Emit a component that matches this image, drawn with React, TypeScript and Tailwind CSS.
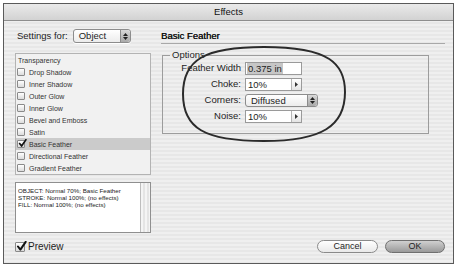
import React from 'react';

const stripes =
  'bg-[repeating-linear-gradient(180deg,#efefef_0px,#efefef_2px,#e7e7e7_2px,#e7e7e7_4px)]';

function CheckMark({ big }: { big: boolean }) {
  const s = big ? 11 : 9;
  return (
    <svg width={s} height={s} viewBox="0 0 10 10" className="absolute -top-[2px] left-0">
      <path d="M1.8 5 L4 7.8 L8.8 0.8" fill="none" stroke="#111" strokeWidth="1.8" strokeLinecap="round" strokeLinejoin="round" />
    </svg>
  );
}

function Box({ checked = false, big = false }: { checked?: boolean; big?: boolean }) {
  return (
    <span
      className={`relative inline-block shrink-0 border border-[#8a8a8a] rounded-[1px] bg-gradient-to-b from-white to-[#dcdcdc] ${
        big ? 'w-[10px] h-[10px]' : 'w-[8px] h-[8px]'
      }`}
    >
      {checked && <CheckMark big={big} />}
    </span>
  );
}

function UpDown() {
  return (
    <span className="flex flex-col items-center justify-center gap-[1px] w-[10px] h-full bg-gradient-to-b from-[#d8d8d8] to-[#a9a9a9] border-l border-[#8c8c8c] rounded-r-[3px]">
      <svg width="5" height="3" viewBox="0 0 5 3"><path d="M0 3 L2.5 0 L5 3 Z" fill="#222" /></svg>
      <svg width="5" height="3" viewBox="0 0 5 3"><path d="M0 0 L2.5 3 L5 0 Z" fill="#222" /></svg>
    </span>
  );
}

function Stepper({ value }: { value: string }) {
  return (
    <div className="flex w-[57px] h-[13px] border border-[#9a9a9a] bg-white">
      <span className="flex-1 pl-[2px] leading-[11px]">{value}</span>
      <span className="flex items-center justify-center w-[10px] border-l border-[#b5b5b5] bg-gradient-to-b from-white to-[#e4e4e4]">
        <svg width="3" height="5" viewBox="0 0 3 5"><path d="M0 0 L3 2.5 L0 5 Z" fill="#333" /></svg>
      </span>
    </div>
  );
}

const effects = [
  'Drop Shadow',
  'Inner Shadow',
  'Outer Glow',
  'Inner Glow',
  'Bevel and Emboss',
  'Satin',
  'Basic Feather',
  'Directional Feather',
  'Gradient Feather',
];

export default function App() {
  return (
    <div
      className="relative w-[458px] h-[268px] bg-white pl-[3px] pt-[3px] text-[#1e1e1e]"
      style={{ fontFamily: '"Liberation Sans", Arial, sans-serif' }}
    >
      <div className={`w-[451px] h-[261px] border border-[#5a5a5a] flex flex-col ${stripes}`}>
        {/* title bar */}
        <div className="h-[17px] shrink-0 border-b border-[#8e8e8e] bg-gradient-to-b from-[#eaeaea] to-[#d2d2d2] flex items-center justify-center text-[9.5px] text-[#111]">
          Effects
        </div>

        <div className="flex-1 flex flex-col pl-[11px] pr-[8px]">
          <div className="flex gap-[10px]">
            {/* left column */}
            <div className="w-[136px] flex flex-col pt-[8px]">
              <div className="h-[14px] flex items-center">
                <span className="ml-[2px] text-[9.5px]">Settings for:</span>
                <div className="ml-[5px] w-[58px] h-[14px] flex border border-[#8c8c8c] rounded-[3px] bg-gradient-to-b from-white to-[#ececec] shadow-[0_1px_0_#fff]">
                  <span className="flex-1 pl-[5px] text-[9.5px] leading-[12px]">Object</span>
                  <UpDown />
                </div>
              </div>

              <div className="mt-[10px] h-[122px] border border-[#b3b3b3] bg-[#f1f1f1] text-[7px] text-[#333]">
                <div className="h-[12px] flex items-center pl-[2px] leading-none">Transparency</div>
                {effects.map((e) => (
                  <div
                    key={e}
                    className={`h-[12px] flex items-center gap-[4px] pl-[1px] leading-none ${
                      e === 'Basic Feather' ? 'bg-[#cbcbcb]' : ''
                    }`}
                  >
                    <Box checked={e === 'Basic Feather'} />
                    <span>{e}</span>
                  </div>
                ))}
              </div>

              <div className="mt-[7px] h-[51px] flex border border-[#8f8f8f] bg-white">
                <div className="flex-1 pl-[2px] pt-[4px] text-[6.2px] leading-[7px] text-[#222]">
                  <div>OBJECT: Normal 70%; Basic Feather</div>
                  <div>STROKE: Normal 100%; (no effects)</div>
                  <div>FILL: Normal 100%; (no effects)</div>
                </div>
                <div className="w-[10px] border-l border-[#bdbdbd] bg-[repeating-linear-gradient(90deg,#f4f4f4_0px,#f4f4f4_2px,#e4e4e4_2px,#e4e4e4_4px)]" />
              </div>
            </div>

            {/* right column */}
            <div className="flex-1 flex flex-col pt-[8px]">
              <div className="h-[15px] border-b border-[#a8a8a8] text-[9.5px] leading-[14px] text-[#111] [text-shadow:0.3px_0_0_#111]">
                Basic Feather
              </div>

              <fieldset className="mt-[5px] ml-[1px] w-[267px] h-[85px] border border-[#9c9c9c] text-[9.5px]">
                <legend className="ml-[7px] px-[2px] leading-[12px]">Options</legend>
                <div className="flex flex-col gap-[3px] pt-[1px]">
                  <div className="flex items-center gap-[4px] h-[13px]">
                    <span className="w-[78px] text-right">Feather Width</span>
                    <div className="w-[57px] h-[13px] border border-[#9a9a9a] bg-white pl-[1px] flex items-center">
                      <span className="bg-[#c6c6c6] px-[1px] leading-[11px]">0.375 in</span>
                    </div>
                  </div>
                  <div className="flex items-center gap-[4px] h-[13px]">
                    <span className="w-[78px] text-right">Choke:</span>
                    <Stepper value="10%" />
                  </div>
                  <div className="flex items-center gap-[4px] h-[13px]">
                    <span className="w-[78px] text-right">Corners:</span>
                    <div className="w-[73px] h-[13px] flex border border-[#8c8c8c] rounded-[3px] bg-gradient-to-b from-white to-[#ececec]">
                      <span className="flex-1 pl-[5px] leading-[11px]">Diffused</span>
                      <UpDown />
                    </div>
                  </div>
                  <div className="flex items-center gap-[4px] h-[13px]">
                    <span className="w-[78px] text-right">Noise:</span>
                    <Stepper value="10%" />
                  </div>
                </div>
              </fieldset>
            </div>
          </div>

          {/* bottom row */}
          <div className="mt-[7px] h-[13px] flex items-center">
            <div className="flex items-center gap-[3px]">
              <Box checked big />
              <span className="text-[10px]">Preview</span>
            </div>
            <div className="ml-auto flex gap-[7px] text-[9px]">
              <button className="w-[61px] h-[13px] rounded-full border border-[#8a8a8a] bg-gradient-to-b from-white to-[#e9e9e9] leading-[11px]">
                Cancel
              </button>
              <button className="w-[60px] h-[13px] rounded-full border border-[#6f6f6f] bg-gradient-to-b from-[#d0d0d0] to-[#9a9a9a] leading-[11px]">
                OK
              </button>
            </div>
          </div>
        </div>
      </div>

      {/* hand-drawn annotation ellipse */}
      <svg className="absolute left-[178px] top-[42px]" width="172" height="104" viewBox="178 42 172 104">
        <path
          d="M264 47 C330 47 345 64 345 92 C345 126 322 141 264 141 C204 141 183 128 183 94 C183 60 204 47 264 47 Z"
          fill="none"
          stroke="#2b2b2b"
          strokeWidth="2"
        />
      </svg>
    </div>
  );
}
